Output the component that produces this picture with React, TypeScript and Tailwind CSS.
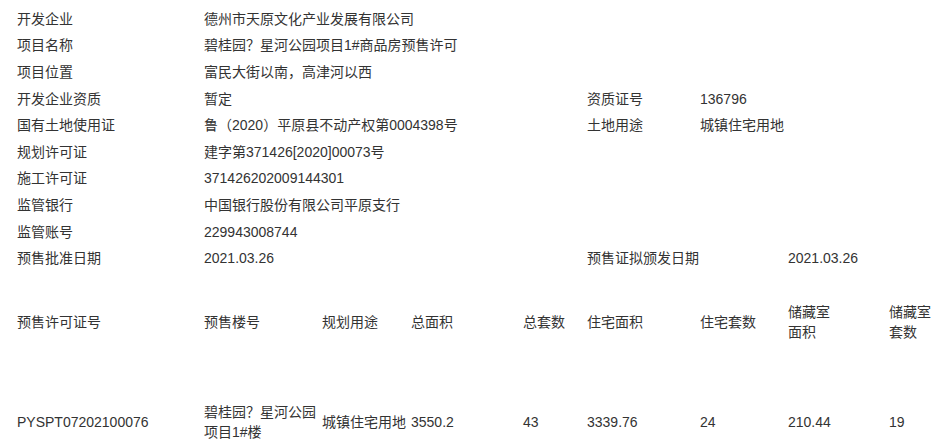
import React from 'react';

const infoRows: Array<[string, string, string?, string?]> = [
  ['开发企业', '德州市天原文化产业发展有限公司'],
  ['项目名称', '碧桂园？星河公园项目1#商品房预售许可'],
  ['项目位置', '富民大街以南，高津河以西'],
  ['开发企业资质', '暂定', '资质证号', '136796'],
  ['国有土地使用证', '鲁（2020）平原县不动产权第0004398号', '土地用途', '城镇住宅用地'],
  ['规划许可证', '建字第371426[2020]00073号'],
  ['施工许可证', '371426202009144301'],
  ['监管银行', '中国银行股份有限公司平原支行'],
  ['监管账号', '229943008744'],
];

const headers: React.ReactNode[] = [
  '预售许可证号',
  '预售楼号',
  '规划用途',
  '总面积',
  '总套数',
  '住宅面积',
  '住宅套数',
  <>储藏室<br />面积</>,
  <>储藏室<br />套数</>,
];

const values: React.ReactNode[] = [
  'PYSPT07202100076',
  <>碧桂园？星河公园<br />项目1#楼</>,
  '城镇住宅用地',
  '3550.2',
  '43',
  '3339.76',
  '24',
  '210.44',
  '19',
];

export default function App() {
  return (
    <div
      className="w-[944px] h-[447px] overflow-hidden bg-white text-[#333] text-[14px] pt-[6px] pl-[17px]"
      style={{ fontFamily: '"Liberation Sans", Arial, "Noto Sans CJK SC", sans-serif' }}
    >
      <div className="grid grid-cols-[187px_118px_89px_112px_64px_113px_88px_101px_1fr] auto-rows-[26.6px] items-center whitespace-nowrap">
        {infoRows.map(([label, value, label2, value2]) => (
          <React.Fragment key={label}>
            <div>{label}</div>
            <div className="col-span-4">{value}</div>
            <div>{label2}</div>
            <div className="col-span-3">{value2}</div>
          </React.Fragment>
        ))}
        <div>预售批准日期</div>
        <div className="col-span-4">2021.03.26</div>
        <div className="col-span-2">预售证拟颁发日期</div>
        <div className="col-span-2">2021.03.26</div>
      </div>

      <div className="grid grid-cols-[187px_118px_89px_112px_64px_113px_88px_101px_1fr] auto-rows-[100px] items-center leading-[20px]">
        {headers.map((h, i) => (
          <div key={i}>{h}</div>
        ))}
        {values.map((v, i) => (
          <div key={i} className="whitespace-nowrap">{v}</div>
        ))}
      </div>
    </div>
  );
}
